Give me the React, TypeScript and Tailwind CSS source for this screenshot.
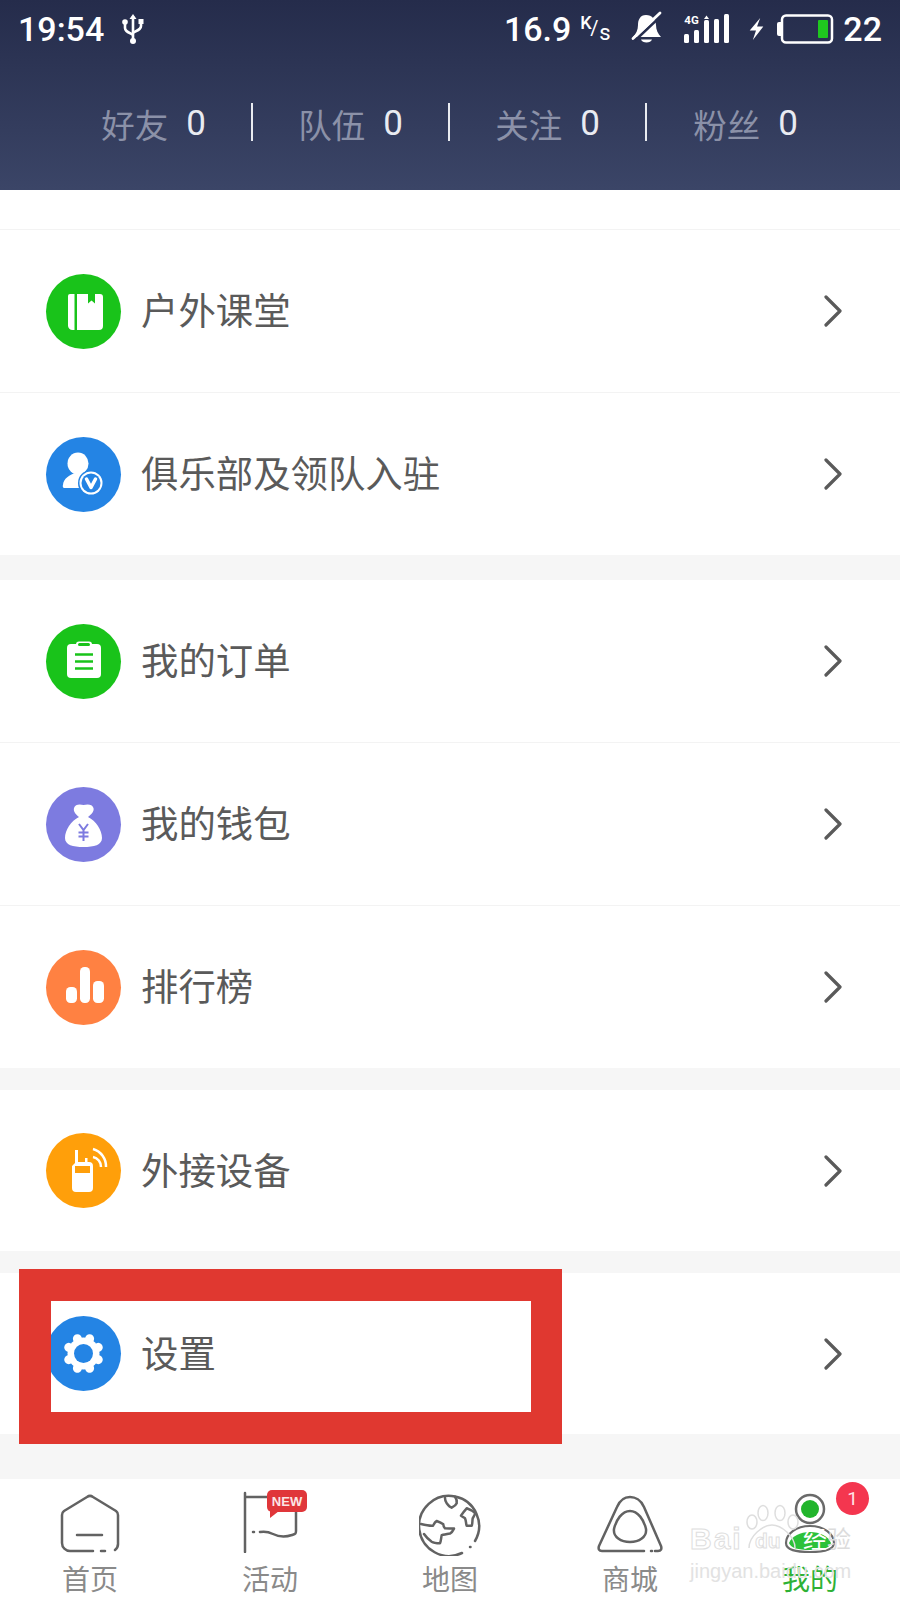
import React from "react";

const CJK = "font-['Roboto','Noto_Sans_CJK_SC',sans-serif]";

function Chevron() {
  return (
    <svg width="20" height="32" viewBox="0 0 20 32" fill="none" stroke="#5a5a5a" strokeWidth="3.200" strokeLinecap="round" strokeLinejoin="round">
      <path d="M3 2 L17 16 L3 30" />
    </svg>
  );
}

function Glyph({ name }: { name: string }) {
  switch (name) {
    case "book":
      return (
        <svg viewBox="0 0 75 75" className="w-full h-full">
          <path d="M24 20h4.500v36h-2a4.500 4.500 0 0 1-4.500-4.500V22a2 2 0 0 1 2-2z" fill="#fff" />
          <path d="M31 20h11v9.500l3.500-3 3.500 3V20h5a3 3 0 0 1 3 3v29a4 4 0 0 1-4 4H31z" fill="#fff" />
        </svg>
      );
    case "user":
      return (
        <svg viewBox="0 0 75 75" className="w-full h-full">
          <ellipse cx="32" cy="26.500" rx="10.500" ry="11" fill="#fff" />
          <path d="M17 48c0-6 7-11 13-12h9l-5 15H19a2 2 0 0 1-2-3z" fill="#fff" />
          <circle cx="45" cy="46" r="13" fill="#2484e4" />
          <circle cx="45" cy="46" r="11.500" fill="#fff" />
          <circle cx="45" cy="46" r="9.500" fill="#2484e4" />
          <path d="M40.500 42l4.500 8.500 4.500-8.500" fill="none" stroke="#fff" strokeWidth="3.500" strokeLinecap="round" strokeLinejoin="round" />
        </svg>
      );
    case "clip":
      return (
        <svg viewBox="0 0 75 75" className="w-full h-full">
          <rect x="21" y="20" width="34" height="34" rx="4" fill="#fff" />
          <rect x="30" y="17.500" width="16" height="6" rx="3" fill="#fff" />
          <rect x="32" y="19" width="12" height="3" rx="1.500" fill="#19c31a" />
          <path d="M29 30.500h18M29 37.500h18M29 44.500h18" stroke="#19c31a" strokeWidth="2.500" />
        </svg>
      );
    case "bag":
      return (
        <svg viewBox="0 0 75 75" className="w-full h-full">
          <path d="M28 21c1-4 6-4 9.500-3 4-1 9-1 10 3 1 4-3 7-5.500 9 8 4 14 13 14 21 0 7-8 9-18.500 9S19 58 19 51c0-8 6-17 14-21-2.500-2-6-5-5-9z" fill="#fff" />
          <path d="M33 37l4.500 6 4.500-6M37.500 43v11M32.500 45.500h10M32.500 49.500h10" fill="none" stroke="#7d7be0" strokeWidth="2" />
        </svg>
      );
    case "bars":
      return (
        <svg viewBox="0 0 75 75" className="w-full h-full">
          <rect x="20" y="37" width="11" height="16" rx="4.500" fill="#fff" />
          <rect x="34" y="17" width="10" height="36" rx="4.500" fill="#fff" />
          <rect x="47" y="31" width="11" height="22" rx="4.500" fill="#fff" />
        </svg>
      );
    case "radio":
      return (
        <svg viewBox="0 0 75 75" className="w-full h-full">
          <path d="M29 17h3v12h7v-4h2.500v4H43a4 4 0 0 1 4 4v22a4 4 0 0 1-4 4H30a4 4 0 0 1-4-4V33l3-3z" fill="#fff" />
          <rect x="29" y="33" width="15" height="7" fill="#ff9f0a" />
          <path d="M47 24a10 10 0 0 1 8 10M47 16a18 18 0 0 1 13 18" fill="none" stroke="#fff" strokeWidth="2.500" />
        </svg>
      );
    case "gear":
      return (
        <svg viewBox="0 0 75 75" className="w-full h-full">
          <g fill="#fff">
            {[0, 45, 90, 135, 180, 225, 270, 315].map((a) => (
              <circle key={a} cx="37.500" cy="21.500" r="4.500" transform={`rotate(${a + 22.5} 37.500 37.500)`} />
            ))}
            <circle cx="37.500" cy="37.500" r="16" />
          </g>
          <circle cx="37.500" cy="37.500" r="9.500" fill="#2484e4" />
        </svg>
      );
    default:
      return null;
  }
}

function Row({ icon, color, label, border = true, h = "h-[162px]" }: { icon: string; color: string; label: string; border?: boolean; h?: string }) {
  return (
    <div className={`flex items-center bg-white ${h} pl-[46px] pr-[57px] ${border ? "border-b border-[#f3f3f3] box-content" : ""}`}>
      <div className={`w-[75px] h-[75px] rounded-full ${color}`}>
        <Glyph name={icon} />
      </div>
      <span className="ml-[20px] mb-[2px] text-[37.400px] leading-none text-[#5a5a5a] font-['Noto_Sans_CJK_SC',sans-serif] flex-1">{label}</span>
      <Chevron />
    </div>
  );
}

function Stat({ label, last }: { label: string; last?: boolean }) {
  return (
    <div className={`w-[197px] h-[38px] flex items-center justify-center gap-[18px] ${last ? "" : "border-r-2 border-[#e9ebf0]"}`}>
      <span className="mt-[3px] text-[33.500px] leading-none text-[#8b91a8] font-['Noto_Sans_CJK_SC',sans-serif]">{label}</span>
      <span className="mt-[3px] text-[35px] leading-none text-[#e9ebf1] font-['Roboto',sans-serif]">0</span>
    </div>
  );
}

function StatusBar() {
  return (
    <div className="h-[57px] flex items-center justify-between pl-[18px] pr-[18px] text-white font-['Roboto',sans-serif] font-medium">
      <div className="flex items-center gap-[18px]">
        <span className="text-[34px] leading-none">19:54</span>
        <svg width="22" height="32" viewBox="0 0 22 32" fill="none" stroke="#fff" strokeWidth="2.600">
          <path d="M11 3v25" />
          <path d="M7.500 6l3.500-5 3.500 5z" fill="#fff" stroke="none" />
          <circle cx="11" cy="28" r="3" fill="#fff" stroke="none" />
          <path d="M3 11v4c0 3 3 4 8 7" />
          <path d="M19 10v3c0 3-3 4-8 7" />
          <circle cx="3" cy="9" r="2.800" fill="#fff" stroke="none" />
          <rect x="16.500" y="6" width="5" height="5" fill="#fff" stroke="none" />
        </svg>
      </div>
      <div className="flex items-center">
        <span className="text-[34px] leading-none">16.9</span>
        <span className="ml-[9px] w-[30px] h-[30px] relative leading-none">
          <span className="absolute left-0 top-0 text-[18px]">K</span>
          <span className="absolute left-[10px] top-[4px] text-[20px] font-normal">/</span>
          <span className="absolute left-[19px] top-[8px] text-[22px] font-normal">s</span>
        </span>
        <svg className="ml-[20px] mb-[1px]" width="33" height="34" viewBox="0 0 33 34">
          <path d="M16 4C10 4 8 9 8 14c0 5-2 9-5 12h28c-3-3-5-7-5-12 0-5-4-10-10-10z" fill="#fff" />
          <path d="M11 28.500h11c-1 4-10 4-11 0z" fill="#fff" />
          <path d="M5 29.500L32 4" stroke="#272e4e" strokeWidth="2.500" />
          <path d="M3 27.500L30 2" stroke="#fff" strokeWidth="2.800" strokeLinecap="round" />
        </svg>
        <div className="ml-[21px] relative w-[46px] h-[30px]">
          <span className="absolute left-0 top-[1px] text-[11.500px] font-bold leading-none">4G</span>
          <svg className="absolute left-0 top-0" width="46" height="30" viewBox="0 0 46 30" fill="#fff">
            <rect x="0" y="20" width="5" height="9" rx="1.500" />
            <rect x="10" y="16" width="5" height="13" rx="1.500" />
            <path d="M20 5l2.500-3.500L25 5z" />
            <rect x="20" y="6" width="5" height="23" rx="1.500" />
            <rect x="30" y="5" width="5" height="24" rx="1.500" />
            <rect x="40" y="0" width="5" height="29" rx="1.500" />
          </svg>
        </div>
        <svg className="ml-[18px]" width="16" height="22" viewBox="0 0 14 21" fill="#fff">
          <path d="M11 0L1 12h6L4 21 14 8H8z" />
        </svg>
        <svg className="ml-[13px]" width="57" height="30" viewBox="0 0 57 30">
          <path d="M0 10a2 2 0 0 1 2-2h2v14H2a2 2 0 0 1-2-2z" fill="#fff" />
          <rect x="5" y="1.500" width="50" height="27" rx="4" fill="none" stroke="#fff" strokeWidth="2.500" />
          <rect x="41" y="6" width="10" height="18" rx="1" fill="#1fc81f" />
        </svg>
        <span className="ml-[9px] text-[34px] leading-none">22</span>
      </div>
    </div>
  );
}

function Watermark() {
  return (
    <div className="absolute left-[690px] top-[1500px] w-[180px] h-[85px] pointer-events-none">
      <svg className="absolute left-[55px] top-0" width="60" height="52" viewBox="0 0 60 52" fill="none" stroke="#dedede" strokeWidth="1.500">
        <ellipse cx="7" cy="22" rx="5" ry="7" />
        <ellipse cx="18" cy="13" rx="5" ry="7.500" />
        <ellipse cx="35" cy="13" rx="5" ry="7.500" />
        <ellipse cx="48" cy="22" rx="5" ry="7" />
        <path d="M4 48C4 36 18 25 27 25s23 11 23 23" />
      </svg>
      <span className="absolute left-0 top-[24px] text-[30px] tracking-[2px] leading-none font-bold text-transparent [-webkit-text-stroke:1px_#dedede] font-['Liberation_Sans',sans-serif]">Bai</span>
      <span className="absolute left-[65px] top-[30px] text-[21px] leading-none font-bold text-transparent [-webkit-text-stroke:1px_#dedede] font-['Liberation_Sans',sans-serif]">du</span>
      <span className="absolute left-[113px] top-[26px] text-[24px] leading-none font-['Noto_Sans_CJK_SC',sans-serif] whitespace-nowrap">
        <span className="text-white">经</span>
        <span className="text-[#dcdcdc]">验</span>
      </span>
      <span className="absolute left-0 top-[61px] text-[20px] leading-none text-[#e2e2e2] font-['Liberation_Sans',sans-serif] whitespace-nowrap">jingyan.baidu.com</span>
    </div>
  );
}

function Tab({ label, active, children }: { label: string; active?: boolean; children: React.ReactNode }) {
  return (
    <div className="flex flex-col items-center relative">
      <div className="h-[84px] w-full flex items-end justify-center">{children}</div>
      <span className={`mt-[1px] text-[28px] leading-none font-['Noto_Sans_CJK_SC',sans-serif] ${active ? "text-[#2eb135]" : "text-[#8a8a8a]"}`}>{label}</span>
    </div>
  );
}

export default function App() {
  const s = { fill: "none", stroke: "#626262", strokeWidth: 2.500, strokeLinecap: "round" as const, strokeLinejoin: "round" as const };
  return (
    <div className={`relative w-[900px] h-[1600px] overflow-hidden bg-[#f6f6f6] ${CJK}`}>
      <header className="h-[190px] bg-gradient-to-b from-[#252c4b] to-[#3b4567]">
        <StatusBar />
        <div className="mt-[46px] flex justify-center">
          <Stat label="好友" />
          <Stat label="队伍" />
          <Stat label="关注" />
          <Stat label="粉丝" last />
        </div>
      </header>

      <div className="h-[39px] bg-white border-b border-[#f3f3f3] box-content" />
      <Row icon="book" color="bg-[#19c31a]" label="户外课堂" />
      <Row icon="user" color="bg-[#2484e4]" label="俱乐部及领队入驻" border={false} />

      <div className="mt-[25px]">
        <Row icon="clip" color="bg-[#19c31a]" label="我的订单" />
        <Row icon="bag" color="bg-[#7d7be0]" label="我的钱包" />
        <Row icon="bars" color="bg-[#ff8142]" label="排行榜" border={false} />
      </div>

      <div className="mt-[22px]">
        <Row icon="radio" color="bg-[#ff9f0a]" label="外接设备" border={false} h="h-[161px]" />
      </div>

      <div className="mt-[22px]">
        <Row icon="gear" color="bg-[#2484e4]" label="设置" border={false} h="h-[161px]" />
      </div>

      <nav className="mt-[45px] h-[121px] bg-white grid grid-cols-5">
        <Tab label="首页">
          <svg width="60" height="60" viewBox="0 0 60 60" {...s} className="mb-[9px]">
            <path d="M33 57H10a8 8 0 0 1-8-8V21a5 5 0 0 1 2-4L27 3a5 5 0 0 1 6 0l23 14a5 5 0 0 1 2 4v28a8 8 0 0 1-3 7" />
            <path d="M17 41h25M41 57h4" />
          </svg>
        </Tab>
        <Tab label="活动">
          <div className="relative w-[66px] h-[62px] mb-[10px] ml-[10px]">
            <svg width="60" height="62" viewBox="0 0 60 62" {...s} className="absolute left-0 top-0">
              <path d="M3 2v59M3 6h25M54 21v19c0 3-1 3-4 4-6 2-13 2-19-1-4-2-8-3-13-2" />
              <path d="M11 41h1" />
            </svg>
            <div className="absolute left-[25px] top-[-1px] w-[40px] h-[22px] rounded-[5px] bg-[#e0363a] flex items-center justify-center text-[13px] font-bold leading-none text-[#fbe5e5] font-['Liberation_Sans',sans-serif]">NEW</div>
            <div className="absolute left-[28px] top-[20px] w-0 h-0 border-t-[7px] border-t-[#e0363a] border-r-[9px] border-r-transparent" />
          </div>
        </Tab>
        <Tab label="地图">
          <svg width="62" height="62" viewBox="0 0 62 62" {...s} className="mb-[7px]">
            <path d="M43 59A30 30 0 1 1 56 47" />
            <path d="M2 30c4 1 8 2 12 1.700 1-2 2-4 3.700-4.700 3 1 5 2 6.600 3.300 0 2 .7 3 1.700 4 3 .3 6 0 9 .3-1 2-2 4-4 5-3 .5-6 1-8.300 1.700-.7 3-.7 6-1.700 8-3 0-6 0-8.300-1.600C9 45 7 43 5 40" />
            <path d="M26 4c0 2 .7 4 1.700 5.300 1.500 2 3 4 5 4.400 2-1 4.300-2.700 5-4.400.3-2 0-4.300-1.700-6.600" />
            <path d="M47.700 14.300c3 1 6.300 2.700 8.300 5 0 2-1.500 3.500-2.300 5-.5 2.500 0 5-1 7.400h-5c-1-2.500-.4-5-1.700-7.400-1.300-1-3-1.500-4-2.600 1.500-2.500 3.500-5 5.700-7.400z" />
            <path d="M51 53h.5" />
          </svg>
        </Tab>
        <Tab label="商城">
          <svg width="68" height="60" viewBox="0 0 68 60" {...s} className="mb-[8px]">
            <path d="M48 56H6c-3 0-4-2-3-5L21 12c3-7 8-10 13-10s11 3 14 10l17 39c1 3 0 5-3 5h-3" />
            <path d="M34 16c8 0 14 9 16 18 1 8-7 13-16 13s-17-5-16-13c2-9 8-18 16-18z" />
            <path d="M55 56h1" />
          </svg>
        </Tab>
        <Tab label="我的" active>
          <svg width="56" height="64" viewBox="0 0 56 64" className="mb-[6px]">
            <circle cx="28" cy="16" r="14" fill="none" stroke="#6a6a6a" strokeWidth="2.500" />
            <circle cx="28" cy="16" r="9" fill="#22b52c" />
            <path d="M4 50c0-9 10-17 24-17s24 8 24 17c0 7-10 9-24 9S4 57 4 50z" fill="#fff" stroke="#6a6a6a" strokeWidth="2.200" />
            <path d="M7 50c3-7 11-11 21-11s18 4 21 11c-1 5-9 7-21 7s-19-2-21-7z" fill="#2cc13a" />
          </svg>
          <div className="absolute left-[116px] top-[3px] w-[33px] h-[33px] rounded-full bg-[#f4364f] flex items-center justify-center text-[19px] leading-none text-[#ffe3e7] font-['Roboto',sans-serif]">1</div>
        </Tab>
      </nav>

      <Watermark />

      <div className="absolute left-[19px] top-[1269px] w-[543px] h-[175px] border-y-[32px] border-l-[32px] border-r-[31px] border-[#e03830] box-border" />
    </div>
  );
}
